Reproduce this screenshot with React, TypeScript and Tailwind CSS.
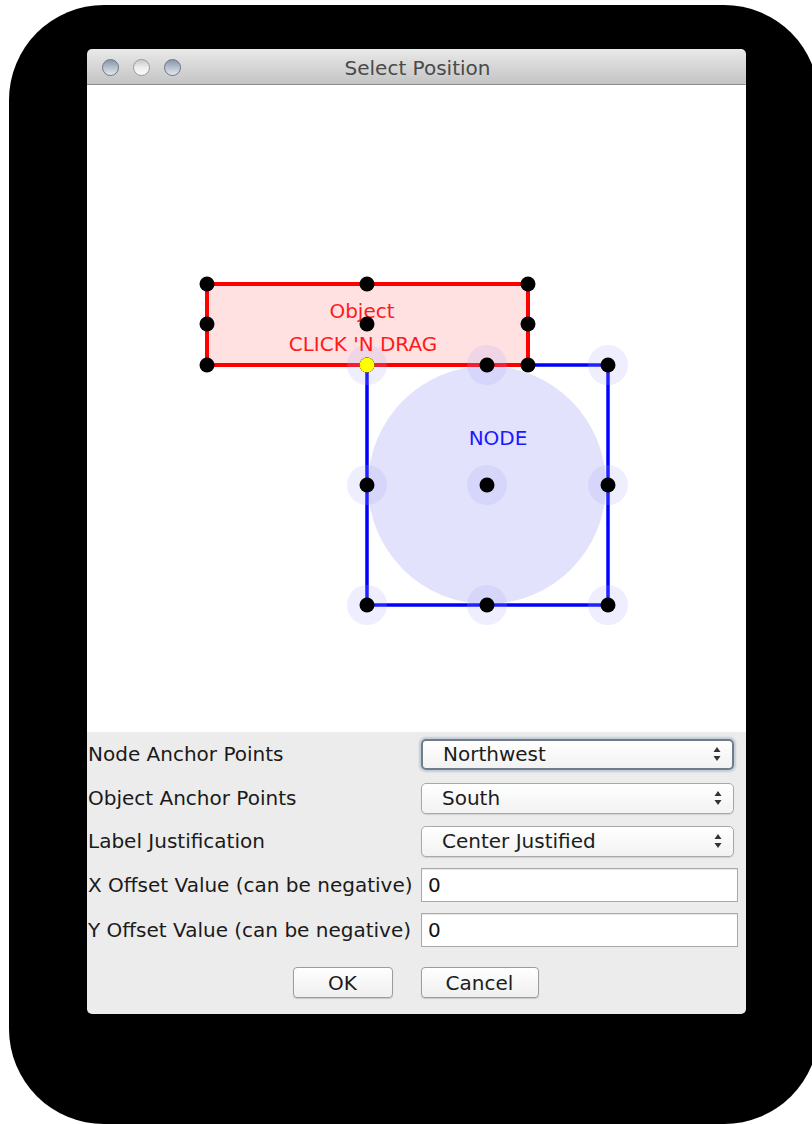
import React from 'react';

const font = "font-['DejaVu_Sans',sans-serif]";

const TrafficLight = ({ dim }: { dim?: boolean }) => (
  <div
    className={
      dim
        ? 'w-[17px] h-[17px] rounded-full border border-[#9a9a9a] bg-gradient-to-b from-[#c8c8c8] via-[#eeeeee] to-[#fafafa]'
        : 'w-[17px] h-[17px] rounded-full border border-[#6d7684] bg-gradient-to-b from-[#8a96a8] via-[#b6c0ce] to-[#e2e8f0]'
    }
  />
);

const Arrows = () => (
  <svg width="8" height="16" viewBox="0 0 8 16" className="shrink-0">
    <path d="M4 1 L7.5 6 L0.5 6 Z" fill="#333" />
    <path d="M4 15 L7.5 10 L0.5 10 Z" fill="#333" />
  </svg>
);

const Select = ({ value, focused }: { value: string; focused?: boolean }) => (
  <div
    className={
      'w-[313px] h-[31px] flex items-center justify-between pl-[20px] pr-[11px] rounded-[5px] bg-gradient-to-b from-white to-[#f2f2f2] text-[20px] text-[#1c1c1c] ' +
      (focused
        ? 'border-2 border-[#707c8c] shadow-[0_0_2px_2px_#c3ccd8]'
        : 'border border-[#a8a8a8] shadow-[0_1px_1px_rgba(0,0,0,0.12)]')
    }
  >
    <span>{value}</span>
    <Arrows />
  </div>
);

const TextInput = ({ value }: { value: string }) => (
  <div className="w-[317px] h-[34px] flex items-center pl-[6px] bg-white border border-[#a9a9a9] shadow-[inset_0_1px_1px_rgba(0,0,0,0.1)] text-[20px] text-[#111]">
    {value}
  </div>
);

const Button = ({ label, width }: { label: string; width: string }) => (
  <div
    className={
      width +
      ' h-[31px] flex items-center justify-center rounded-[4px] border border-[#9c9c9c] bg-gradient-to-b from-white to-[#efefef] shadow-[0_1px_1px_rgba(0,0,0,0.15)] text-[20px] text-[#1c1c1c]'
    }
  >
    {label}
  </div>
);

const Row = ({ label, h, children }: { label: string; h: string; children: React.ReactNode }) => (
  <div className={'flex items-center ' + h}>
    <div className="w-[334px] pl-[1px] text-[20px] text-[#1a1a1a] whitespace-nowrap">{label}</div>
    {children}
  </div>
);

const Diagram = () => {
  const red = [120, 280, 441];
  const redY = [199, 239, 280];
  const node = [280, 400, 521];
  const nodeY = [280, 400, 520];
  return (
    <svg width="659" height="647" viewBox="0 0 659 647" className="block">
      <circle cx="400" cy="400" r="119" fill="#e2e2fc" />
      <rect x="280" y="280" width="241" height="240" fill="none" stroke="#0000ff" strokeWidth="3.5" />
      <rect x="120" y="199" width="321" height="81" fill="#ffe1e1" stroke="#ff0000" strokeWidth="4" />
      {nodeY.map((y) =>
        node.map((x) => <circle key={`h${x}-${y}`} cx={x} cy={y} r="20" fill="rgba(170,170,250,0.2)" />)
      )}
      <text x="275" y="233" textAnchor="middle" fill="#ff1a1a" fontSize="20" fontFamily="DejaVu Sans, sans-serif">
        Object
      </text>
      <text x="276" y="266" textAnchor="middle" fill="#ff1a1a" fontSize="20" fontFamily="DejaVu Sans, sans-serif">
        CLICK 'N DRAG
      </text>
      <text x="411" y="360" textAnchor="middle" fill="#1a1aff" fontSize="20" fontFamily="DejaVu Sans, sans-serif">
        NODE
      </text>
      {redY.map((y) => red.map((x) => <circle key={`r${x}-${y}`} cx={x} cy={y} r="7.5" fill="#000" />))}
      {nodeY.map((y) => node.map((x) => <circle key={`n${x}-${y}`} cx={x} cy={y} r="7.5" fill="#000" />))}
      <circle cx="280" cy="280" r="7.5" fill="#ffff00" />
    </svg>
  );
};

export default function App() {
  return (
    <div className={'w-[812px] h-[1124px] bg-white overflow-hidden ' + font}>
      <div className="ml-[9px] mt-[5px] w-[810px] h-[1119px] rounded-[95px] bg-black pl-[78px] pt-[44px]">
        <div className="w-[659px] h-[965px] flex flex-col rounded-[5px] overflow-hidden">
          {/* title bar */}
          <div className="h-[36px] shrink-0 flex items-center relative bg-gradient-to-b from-[#e9e9e9] to-[#c4c4c4] border-b border-[#8e8e8e]">
            <div className="flex items-center gap-[14px] pl-[15px] pt-[2px]">
              <TrafficLight />
              <TrafficLight dim />
              <TrafficLight />
            </div>
            <div className="absolute inset-0 flex items-center justify-center text-[20px] text-[#4a4a4a] pl-[2px] pt-[2px]">
              Select Position
            </div>
          </div>

          {/* canvas */}
          <div className="h-[647px] shrink-0 bg-white">
            <Diagram />
          </div>

          {/* form */}
          <div className="flex-1 bg-[#ececec] flex flex-col">
            <Row label="Node Anchor Points" h="h-[44px]">
              <Select value="Northwest" focused />
            </Row>
            <Row label="Object Anchor Points" h="h-[44px]">
              <Select value="South" />
            </Row>
            <Row label="Label Justification" h="h-[42px]">
              <Select value="Center Justified" />
            </Row>
            <Row label="X Offset Value (can be negative)" h="h-[46px]">
              <TextInput value="0" />
            </Row>
            <Row label="Y Offset Value (can be negative)" h="h-[44px]">
              <TextInput value="0" />
            </Row>
            <div className="flex justify-center gap-[28px] pt-[15px] pr-[2px]">
              <Button label="OK" width="w-[100px]" />
              <Button label="Cancel" width="w-[118px]" />
            </div>
          </div>
        </div>
      </div>
    </div>
  );
}
